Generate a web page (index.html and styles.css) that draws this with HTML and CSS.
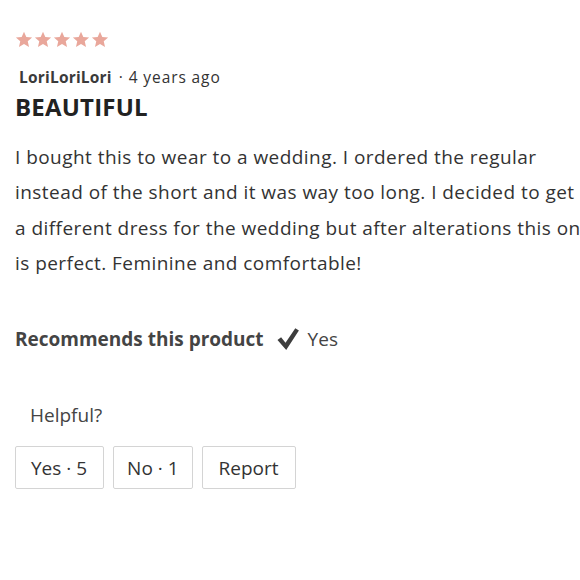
FILE: index.html
```html
<!DOCTYPE html>
<html lang="en">
<head>
<meta charset="utf-8">
<link rel="stylesheet" href="styles.css">
</head>
<body>
<div class="review">
  <div class="stars" aria-label="5 out of 5 stars">
    <svg class="star" viewBox="0 0 24 24"><path d="M12 1.5l3.1 7.1 7.7.7-5.8 5.1 1.7 7.6L12 18.1 5.3 22l1.7-7.6L1.2 9.3l7.7-.7z"/></svg>
    <svg class="star" viewBox="0 0 24 24"><path d="M12 1.5l3.1 7.1 7.7.7-5.8 5.1 1.7 7.6L12 18.1 5.3 22l1.7-7.6L1.2 9.3l7.7-.7z"/></svg>
    <svg class="star" viewBox="0 0 24 24"><path d="M12 1.5l3.1 7.1 7.7.7-5.8 5.1 1.7 7.6L12 18.1 5.3 22l1.7-7.6L1.2 9.3l7.7-.7z"/></svg>
    <svg class="star" viewBox="0 0 24 24"><path d="M12 1.5l3.1 7.1 7.7.7-5.8 5.1 1.7 7.6L12 18.1 5.3 22l1.7-7.6L1.2 9.3l7.7-.7z"/></svg>
    <svg class="star" viewBox="0 0 24 24"><path d="M12 1.5l3.1 7.1 7.7.7-5.8 5.1 1.7 7.6L12 18.1 5.3 22l1.7-7.6L1.2 9.3l7.7-.7z"/></svg>
  </div>
  <div class="meta"><span class="author">LoriLoriLori</span><span class="date">· 4 years ago</span></div>
  <h2 class="title">BEAUTIFUL</h2>
  <p class="body">I bought this to wear to a wedding. I ordered the regular<br>instead of the short and it was way too long. I decided to get<br>a different dress for the wedding but after alterations this one<br>is perfect. Feminine and comfortable!</p>
  <div class="recommend">
    <span class="rec-label">Recommends this product</span>
    <svg class="check" viewBox="0 0 24 24"><path d="M1.5 13l3.6-2.8 4.4 5.6L19.3 1.2l3.6 2.3L10.2 23z"/></svg>
    <span class="rec-value">Yes</span>
  </div>
  <div class="helpful">Helpful?</div>
  <div class="actions">
    <button class="btn btn-yes">Yes · 5</button>
    <button class="btn btn-no">No · 1</button>
    <button class="btn btn-report">Report</button>
  </div>
</div>
</body>
</html>
```
FILE: styles.css
```css
html, body {
  margin: 0;
  padding: 0;
  background: #fff;
  overflow: hidden;
}
body {
  font-family: "Open Sans", "Noto Sans", sans-serif;
  color: #2b2b2b;
}
.review {
  width: 620px;
  padding: 30px 0 0 15px;
}
.stars {
  display: flex;
  gap: 1px;
  height: 20px;
}
.star {
  width: 18px;
  height: 19px;
  fill: #e9a79b;
}
.meta {
  margin-top: 16px;
  padding-left: 4px;
  font-size: 15.5px;
  line-height: 22px;
  color: #333;
}
.author {
  font-weight: 700;
  color: #3a3a3a;
  letter-spacing: 0.2px;
}
.date {
  margin-left: 7px;
  letter-spacing: 0.9px;
}
.title {
  margin: 3px 0 0;
  font-size: 24px;
  line-height: 32px;
  font-weight: 700;
  color: #222;
  letter-spacing: 0.2px;
}
.body {
  margin: 17px 0 0;
  font-size: 19px;
  line-height: 35.3px;
  color: #333;
  white-space: nowrap;
  letter-spacing: 0.45px;
}
.recommend {
  display: flex;
  align-items: center;
  margin-top: 45px;
  font-size: 19px;
  line-height: 26px;
  color: #444;
}
.rec-label {
  font-weight: 700;
}
.check {
  width: 24px;
  height: 24px;
  margin-left: 12px;
  fill: #3d3d3d;
}
.rec-value {
  margin-left: 8px;
}
.helpful {
  margin-top: 50px;
  padding-left: 15px;
  font-size: 19px;
  line-height: 26px;
  color: #444;
}
.actions {
  display: flex;
  gap: 9px;
  margin-top: 18px;
}
.btn {
  height: 43px;
  padding: 0 15px;
  border: 1px solid #d4d4d4;
  border-radius: 2px;
  background: #fff;
  font-family: inherit;
  font-size: 19px;
  color: #333;
}
.btn-yes {
  padding: 0 16px 0 15px;
}
.btn-no {
  padding: 0 13px;
}
.btn-report {
  padding: 0 16px;
}
```
